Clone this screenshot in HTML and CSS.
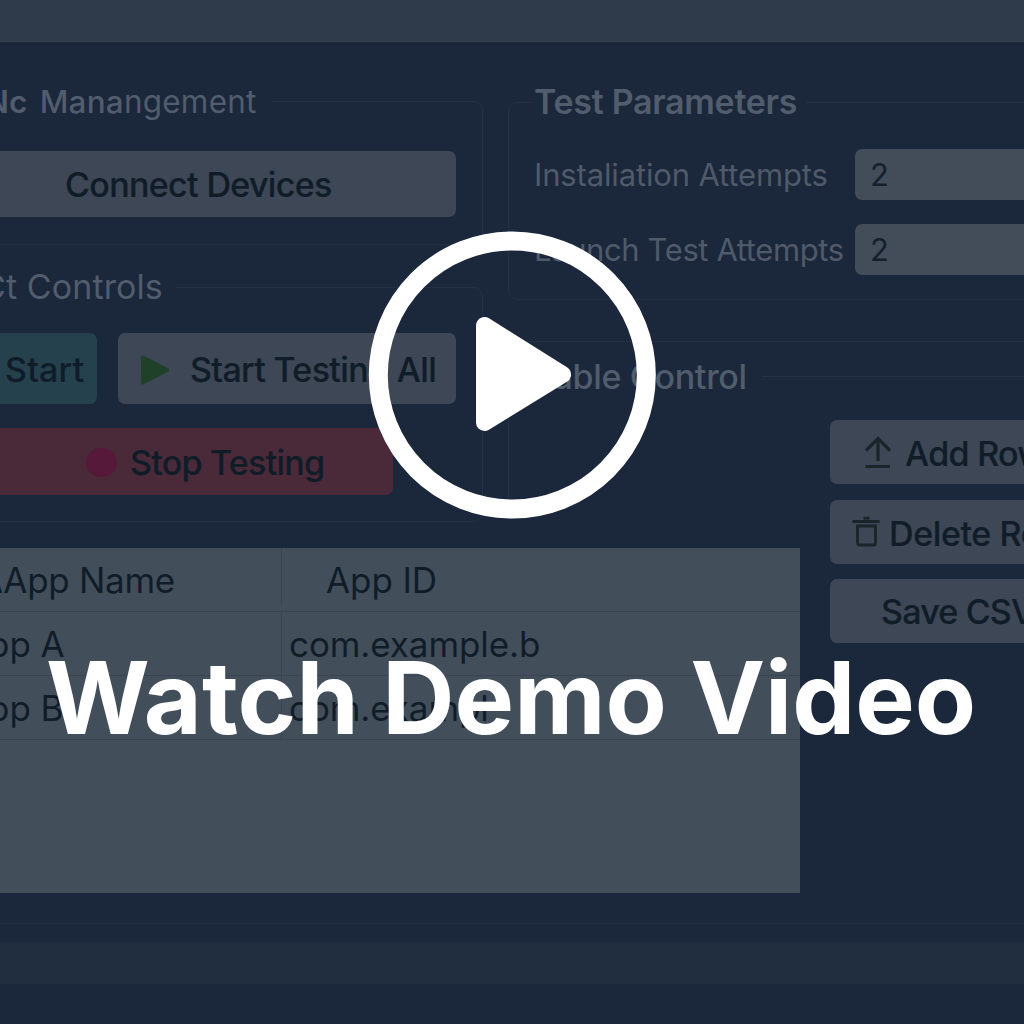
FILE: index.html
```html
<!DOCTYPE html>
<html lang="en">
<head>
<meta charset="utf-8">
<title>Watch Demo Video</title>
<link rel="stylesheet" href="styles.css">
</head>
<body>
<div class="app">
  <header class="titlebar"></header>
  <main class="workspace">
    <section class="left">
      <fieldset class="group devices">
        <legend><span class="strong lead">Nc</span><span class="medium">Mana</span>ngement</legend>
        <button class="btn connect">Connect Devices</button>
      </fieldset>
      <fieldset class="group controls">
        <legend>Ct Controls</legend>
        <div class="btn-row">
          <button class="btn start">Start</button>
          <button class="btn start-all">
            <svg width="30" height="32" viewBox="0 0 30 32"><path d="M3 3.500v25l24-12.500z" fill="currentColor" stroke="currentColor" stroke-width="4" stroke-linejoin="round"/></svg>
            <span>Start Testing All</span>
          </button>
        </div>
        <button class="btn stop"><span class="dot"></span><span>Stop Testing</span></button>
      </fieldset>
    </section>
    <section class="right">
      <fieldset class="group params">
        <legend>Test Parameters</legend>
        <div class="field"><label>Instaliation Attempts</label><div class="input">2</div></div>
        <div class="field launch"><label>Launch Test Attempts</label><div class="input">2</div></div>
      </fieldset>
      <hr class="rule">
      <fieldset class="group table-control">
        <legend>Table Control</legend>
        <div class="actions">
          <button class="btn add">
            <svg width="28" height="34" viewBox="0 0 28 34" fill="none" stroke="currentColor" stroke-width="3.200"><path d="M14 26V4M2 15.500 14 3.500l12 12M1.500 31.500H26"/></svg>
            <span>Add Row</span>
          </button>
          <button class="btn delete">
            <svg width="28" height="32" viewBox="0 0 28 32" fill="none" stroke="currentColor" stroke-width="2.800"><path d="M0.500 5.500h27M11.500 2.200h6M5.500 10h18v17a2 2 0 0 1-2 2h-14a2 2 0 0 1-2-2z"/></svg>
            <span>Delete Row</span>
          </button>
          <button class="btn save"><span>Save CSV</span></button>
        </div>
      </fieldset>
    </section>
    <div class="table">
      <div class="tr head"><div class="name">AApp Name</div><div class="id">App ID</div></div>
      <div class="tr"><div class="name">App A</div><div class="id">com.example.b</div></div>
      <div class="tr"><div class="name">App B</div><div class="id">com.exampl</div></div>
    </div>
  </main>
  <footer class="statusbar"></footer>
  <div class="overlay">
    <svg class="play" width="288" height="288" viewBox="0 0 288 288"><circle cx="144.300" cy="144" r="134" fill="none" stroke="#fff" stroke-width="19"/><path d="M116.500 94.500v97l78-48z" fill="#fff" stroke="#fff" stroke-width="17" stroke-linejoin="round"/></svg>
    <h1>Watch Demo Video</h1>
  </div>
</div>
</body>
</html>
```
FILE: styles.css
```css
* { box-sizing: border-box; }

body {
  margin: 0;
  background: #1b273a;
  font-family: Inter, "Liberation Sans", sans-serif;
}

.app {
  position: relative;
  display: flex;
  flex-direction: column;
  width: 1024px;
  height: 1024px;
  overflow: hidden;
  background: #1b273a;
}

.titlebar {
  height: 42px;
  background: #2f3b4b;
  border-bottom: 1px solid #354150;
}

.workspace {
  display: grid;
  grid-template-columns: 484px 24px 292px 1fr;
  grid-template-rows: 506px 345px 1fr;
  height: 882px;
  border-bottom: 1px solid #243043;
}

.left {
  grid-area: 1 / 1 / 2 / 2;
  padding-top: 41px;
  margin-left: -25px;
}

.right {
  grid-area: 1 / 3 / 4 / 5;
  display: flex;
  flex-direction: column;
  padding-top: 42px;
}

.group {
  min-width: 0;
  margin: 0;
  padding: 0;
  border: 1px solid #243043;
  border-radius: 10px;
}

legend {
  height: 36px;
  padding: 0;
  font-size: 34px;
  line-height: 36px;
  color: #515c6c;
  white-space: pre;
}

.strong { font-weight: 600; }

.medium { font-weight: 500; }

.lead { margin-right: 12px; }

.btn {
  display: flex;
  align-items: center;
  padding: 0;
  border: 0;
  border-radius: 7px;
  background: #3e4755;
  color: #101d29;
  font: 500 34px/40px Inter, "Liberation Sans", sans-serif;
  white-space: nowrap;
  -webkit-text-stroke: 0.2px #101d29;
}

.btn svg { flex: none; }

.devices {
  height: 162px;
  margin-right: 1px;
  border-radius: 0 10px 0 0;
}

.devices legend {
  padding: 1px 15px 0 9px;
  font-size: 31.5px;
  letter-spacing: 0.2px;
}

.connect {
  width: 480px;
  height: 66px;
  margin-top: 32px;
  padding: 2px 0 0 89px;
  letter-spacing: -0.65px;
}

.controls {
  height: 253px;
  margin: 24px 1px 0 0;
}

.controls legend {
  padding: 0 13px 0 5px;
  letter-spacing: 0.1px;
}

.btn-row {
  display: flex;
  gap: 21px;
  margin-top: 28px;
}

.start {
  width: 121px;
  height: 71px;
  padding: 2px 0 0 29px;
  background: #26414e;
  letter-spacing: 0.2px;
}

.start-all {
  width: 338px;
  height: 71px;
  padding: 2px 0 0 22px;
  gap: 20px;
  letter-spacing: -0.65px;
}

.start-all svg { color: #1f4129; }

.stop {
  width: 417px;
  height: 67px;
  margin-top: 24px;
  padding: 2px 0 0 110px;
  gap: 13px;
  background: #4a2a38;
  letter-spacing: -0.75px;
}

.dot {
  width: 31px;
  height: 29px;
  border-radius: 50%;
  background: #57193a;
}

.params {
  height: 216px;
  margin-right: -20px;
  padding-left: 25px;
}

.params legend {
  margin-left: -2px;
  padding: 0 9px 0 2px;
  font-weight: 600;
  letter-spacing: -0.3px;
}

.field {
  display: flex;
  align-items: center;
  height: 51px;
  margin-top: 29px;
  font-size: 31px;
  color: #4f5a6a;
  letter-spacing: -0.15px;
  white-space: nowrap;
}

.field.launch {
  margin-top: 24px;
  letter-spacing: -0.4px;
}

.field label {
  flex: none;
  width: 321px;
}

.input {
  flex: none;
  width: 200px;
  height: 51px;
  padding-left: 15px;
  border-radius: 7px;
  background: #434d5a;
  color: #14212c;
  line-height: 52px;
}

.rule {
  width: 100%;
  height: 1px;
  margin: 41px 0 0;
  border: 0;
  background: #243043;
}

/* The left edge only runs down to the table area. */
.table-control {
  flex: 1;
  margin: 16px -20px -1px 0;
  padding-left: 1px;
  border-width: 1px 0 0;
  border-radius: 0;
  background: linear-gradient(#243043, #243043) 0 0 / 1px 134px no-repeat;
}

.table-control legend {
  margin-left: 23px;
  padding: 1px 15px 0 2px;
  font-weight: 500;
  letter-spacing: -0.3px;
}

.actions {
  display: flex;
  flex-direction: column;
  gap: 15.500px;
  margin: 26px 0 0 321px;
}

.actions .btn {
  width: 240px;
  height: 64px;
}

.actions span { padding-top: 4px; }

.add {
  padding-left: 34px;
  gap: 13px;
  letter-spacing: -0.7px;
}

.delete {
  padding-left: 22px;
  gap: 9px;
  letter-spacing: -0.4px;
}

.save {
  padding-left: 51px;
  letter-spacing: -0.8px;
}

.actions .save span { padding-top: 2px; }

.actions svg { color: #1a2529; }

.table {
  grid-area: 2 / 1 / 3 / 4;
  z-index: 1;
  background: #434e5b;
  color: #101d29;
  font-size: 35px;
  letter-spacing: -0.1px;
}

.tr {
  display: flex;
  height: 64px;
  line-height: 65px;
  border-bottom: 1px solid #384453;
  white-space: nowrap;
}

.name {
  width: 282px;
  border-right: 1px solid #384453;
  text-indent: -36px;
}

.id { padding-left: 7px; }

.head .name {
  height: 57px;
  text-indent: -21px;
  letter-spacing: -0.3px;
}

.head .id { padding-left: 44px; }

.statusbar {
  height: 42px;
  margin-top: 18px;
  background: #202e40;
}

.overlay {
  position: absolute;
  inset: 0;
  z-index: 2;
  display: flex;
  flex-direction: column;
  align-items: center;
  padding-top: 231px;
}

h1 {
  margin: 119px 2px 0 0;
  color: #fff;
  font-size: 100px;
  font-weight: 700;
  line-height: 120px;
  white-space: nowrap;
}
```
